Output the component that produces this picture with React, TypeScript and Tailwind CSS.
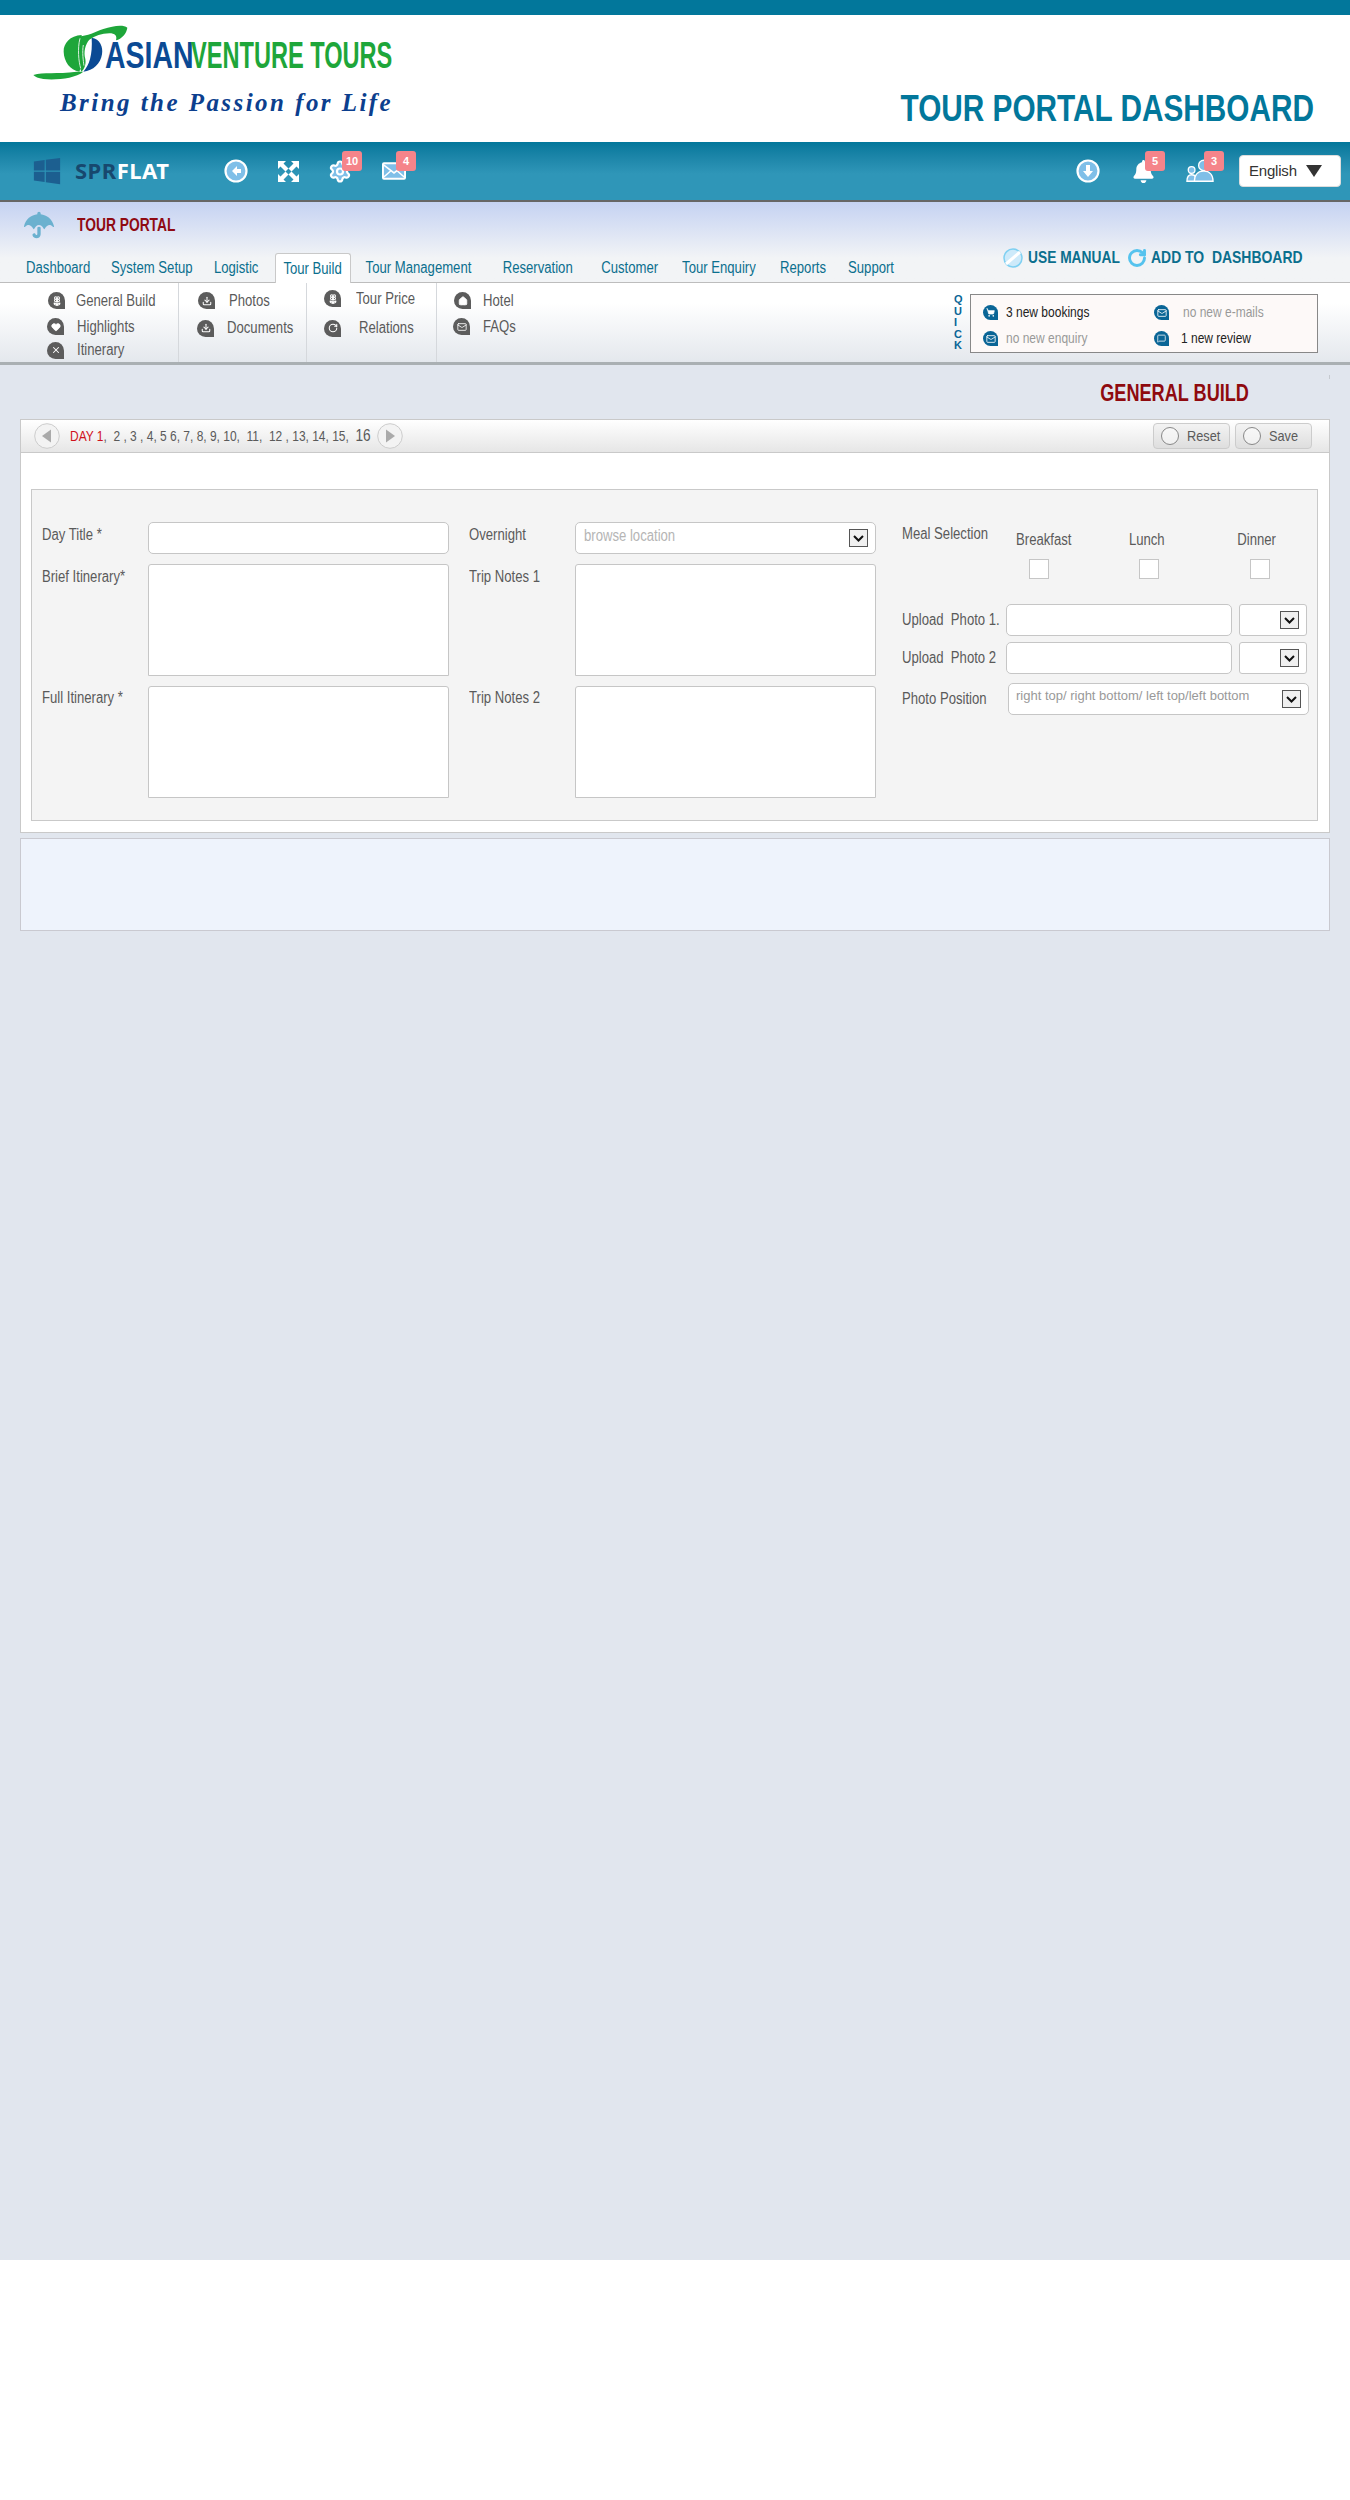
import React from "react";
import { Settings, Mail, Home, MessageSquare, ShoppingCart, Download, Heart, X, Flower2, RotateCw } from "lucide-react";
import { FaWindows, FaUmbrella, FaBell } from "react-icons/fa";

const font = "font-['Liberation_Sans',Arial,sans-serif]";

function T({ className = "scale-x-[0.82]", children }: { className?: string; children: React.ReactNode }) {
  return <span className={`inline-block origin-left whitespace-pre ${className}`}>{children}</span>;
}

function Badge({ n, className = "left-[14px]" }: { n: string; className?: string }) {
  return (
    <span className={`absolute -top-[8px] flex h-[20px] w-[20px] items-center justify-center rounded-[3px] bg-[#f5848a] text-[11px] font-bold text-white ${className}`}>
      {n}
    </span>
  );
}

function ToolIcon({ className, children, badge }: { className: string; children: React.ReactNode; badge?: string }) {
  return (
    <div className={`relative flex h-[24px] items-center justify-center ${className}`}>
      {children}
      {badge && <Badge n={badge} />}
    </div>
  );
}

function Bubble({ className = "h-[17px] w-[17px] bg-[#5c5c5c]", children }: { className?: string; children: React.ReactNode }) {
  return (
    <span className={`flex shrink-0 items-center justify-center rounded-full rounded-br-[2px] ${className}`}>
      {children}
    </span>
  );
}

function SubItem({ icon, label, className }: { icon: React.ReactNode; label: string; className: string }) {
  return (
    <div className={`flex items-center text-[16px] text-[#5a5a5a] ${className}`}>
      <Bubble>{icon}</Bubble>
      <T>{label}</T>
    </div>
  );
}

function Chevron() {
  return (
    <span className="absolute right-[7px] top-1/2 flex h-[18px] w-[19px] -translate-y-1/2 items-center justify-center border border-[#555] bg-[#f0f0f0]">
      <svg width="11" height="7" viewBox="0 0 11 7"><path d="M1 1l4.5 4.5L10 1" fill="none" stroke="#111" strokeWidth="2" /></svg>
    </span>
  );
}

function Field({ className, children }: { className: string; children?: React.ReactNode }) {
  return <div className={`relative border border-[#c6c6c6] bg-white ${className}`}>{children}</div>;
}

function Quick({ icon, text, className }: { icon: React.ReactNode; text: string; className: string }) {
  return (
    <div className={`flex items-center text-[15px] ${className}`}>
      <Bubble className="h-[15px] w-[15px] bg-[#0a6596]">{icon}</Bubble>
      <T className="scale-x-[0.8]">{text}</T>
    </div>
  );
}

function Tab({ className, children }: { className: string; children: string }) {
  return (
    <div className={`flex h-[30px] items-center justify-center text-[16px] text-[#0b6f8e] ${className}`}>
      <span className="inline-block scale-x-[0.82] whitespace-pre">{children}</span>
    </div>
  );
}

export default function App() {
  const w = { size: 10, color: "#fff", strokeWidth: 2.5 };
  const lbl = "text-[16px] text-[#5a5a5a]";
  return (
    <div className={`${font} w-[1350px]`}>
      <div className="h-[15px] bg-[#02779b]" />

      <header className="flex h-[127px] justify-between bg-white">
        <div className="relative w-[420px] pl-[60px]">
          <svg className="absolute left-[20px] top-0" width="200" height="100" viewBox="0 0 600 300">
            <path d="M215 68C240 72 250 95 246 118C242 145 220 168 190 170C208 150 218 120 215 68Z" fill="#0b4a94" />
            <path d="M185 60C150 62 130 85 131 110C132 140 150 165 178 170C190 150 180 100 185 60Z" fill="#1ea63a" />
            <path d="M172 64C205 64 225 50 250 42C280 32 310 28 322 38C320 55 305 72 288 76C292 62 285 55 268 55C245 55 225 62 208 74C196 88 190 110 196 132C199 150 192 164 184 170C176 150 172 100 172 64Z" fill="#1ea63a" />
            <path d="M40 180C70 170 110 178 170 170L190 170C165 190 110 196 70 192C55 190 45 186 40 180Z" fill="#1ea63a" />
            <path d="M180 70C172 100 176 140 182 160M190 90C186 110 190 140 192 152" stroke="#d8f0dc" strokeWidth="3" fill="none" />
          </svg>
          <div className="h-[28px]" />
          <div className="flex h-[26px] items-center whitespace-nowrap pl-[45px]">
            <span className="inline-block w-[86px] origin-left scale-x-[0.79] text-[36px] font-bold leading-none text-[#0b4a94]">ASIAN</span>
            <span className="inline-block origin-left scale-x-[0.655] text-[36px] font-bold leading-none text-[#1ea63a]">VENTURE TOURS</span>
          </div>
          <div className="mt-[19px] whitespace-nowrap font-['Liberation_Serif',serif] text-[25px] font-bold italic leading-[30px] tracking-[2.45px] text-[#0c3f8e]">
            Bring the Passion for Life
          </div>
        </div>
        <h1 className="mb-[13px] mr-[36px] origin-right scale-x-[0.827] self-end whitespace-nowrap text-[36px] font-bold leading-[40px] text-[#02779b]">
          TOUR PORTAL DASHBOARD
        </h1>
      </header>

      <nav className="flex h-[60px] items-center border-b-2 border-[#666] bg-gradient-to-b from-[#02779b] from-0% to-[#2f96b8] to-55% pl-[32px]">
        <FaWindows size={30} color="#1c5f90" />
        <span className="ml-[13px] w-[149px] whitespace-nowrap text-[24px] font-bold tracking-[0.5px]">
          <span className="inline-block font-['Noto_Sans',sans-serif] text-[22px] text-[#17486e]">SPR</span>
          <span className="font-['Noto_Sans',sans-serif] text-[22px] text-white">FLAT</span>
        </span>
        <ToolIcon className="w-[24px]">
          <svg width="24" height="24" viewBox="0 0 24 24"><circle cx="12" cy="12" r="10.5" fill="#7fbfe8" stroke="#fff" strokeWidth="2.2" /><path d="M13 7l-5 5 5 5v-3h4v-4h-4z" fill="#fff" /></svg>
        </ToolIcon>
        <ToolIcon className="ml-[28px] w-[24px]">
          <svg width="23" height="23" viewBox="0 0 23 23"><path d="M1 1h8L6.5 3.5 11.5 8.5 8.5 11.5 3.5 6.5 1 9zM22 1v8l-2.5-2.5-5 5-3-3 5-5L14 1zM1 22v-8l2.5 2.5 5-5 3 3-5 5L9 22zM22 22h-8l2.5-2.5-5-5 3-3 5 5L22 14z" fill="#fff" /></svg>
        </ToolIcon>
        <ToolIcon className="ml-[28px] w-[24px]" badge="10">
          <Settings size={27} color="#fff" fill="#7fbfe8" strokeWidth={2.2} />
        </ToolIcon>
        <ToolIcon className="ml-[30px] w-[24px]" badge="4">
          <svg width="25" height="18" viewBox="0 0 25 18"><rect x="1" y="1" width="23" height="16" rx="1" fill="#7fbfe8" stroke="#fff" strokeWidth="2" /><path d="M1 2l11.5 9L24 2M1 16l8-7M24 16l-8-7" fill="none" stroke="#fff" strokeWidth="1.6" /></svg>
        </ToolIcon>

        <div className="ml-auto flex items-center pr-[9px]">
          <ToolIcon className="w-[24px]">
            <svg width="24" height="24" viewBox="0 0 24 24"><circle cx="12" cy="12" r="10.5" fill="#7fbfe8" stroke="#fff" strokeWidth="2.2" /><path d="M10 6h4v6h3l-5 6-5-6h3z" fill="#fff" /></svg>
          </ToolIcon>
          <ToolIcon className="ml-[31px] w-[24px]" badge="5">
            <FaBell size={23} color="#fff" />
          </ToolIcon>
          <ToolIcon className="ml-[31px] w-[28px]">
            <svg width="30" height="26" viewBox="0 0 30 26">
              <circle cx="6" cy="12" r="3.6" fill="#7fbfe8" stroke="#fff" strokeWidth="1.4" />
              <path d="M1 24c0-5 2-7 5-7s4 1 4 3v4z" fill="#7fbfe8" stroke="#fff" strokeWidth="1.4" />
              <circle cx="19" cy="7" r="5.5" fill="#7fbfe8" stroke="#fff" strokeWidth="1.4" />
              <path d="M9 24c0-7 4-11 10-11s10 4 10 11z" fill="#7fbfe8" stroke="#fff" strokeWidth="1.4" />
            </svg>
            <Badge n="3" className="left-[18px]" />
          </ToolIcon>
          <div className="ml-[25px] flex h-[32px] w-[102px] items-center rounded-[4px] border border-[#ddd] bg-white pl-[9px] text-[15px] tracking-[-0.2px] text-[#333]">
            English
            <svg className="ml-[9px]" width="16" height="12" viewBox="0 0 16 12"><path d="M0 0h16L8 12z" fill="#333" /></svg>
          </div>
        </div>
      </nav>

      <section className="h-[81px] border-b border-[#bdbdbd] bg-gradient-to-b from-[#c5d2f2] from-0% to-[#f2f4f6] to-70%">
        <div className="flex h-[51px] items-start pl-[24px] pt-[8px]">
          <FaUmbrella size={30} color="#6bb1cf" />
          <T className="ml-[23px] mt-[2px] scale-x-[0.767] text-[18px] font-bold text-[#8f0a12]">TOUR PORTAL</T>
          <div className="ml-auto mr-[47px] mt-[35px] flex items-center text-[17px] font-bold text-[#0b6f8e]">
            <svg width="20" height="22" viewBox="0 0 20 22"><circle cx="10" cy="11" r="9" fill="#cdeafa" stroke="#7fd0f2" strokeWidth="1.5" /><path d="M3 17L17 5" stroke="#fff" strokeWidth="3" /></svg>
            <span className="ml-[5px] w-[92px]"><T className="scale-x-[0.81]">USE MANUAL</T></span>
            <RotateCw className="ml-[7px]" size={20} color="#55c3ee" strokeWidth={3.5} />
            <span className="ml-[4px] w-[152px]"><T>ADD TO  DASHBOARD</T></span>
          </div>
        </div>
        <div className="flex pl-[16px]">
          <Tab className="w-[84px]">Dashboard</Tab>
          <Tab className="w-[103px]">System Setup</Tab>
          <Tab className="w-[66px]">Logistic</Tab>
          <Tab className="relative ml-[6px] w-[76px] rounded-t-[3px] border border-b-0 border-[#c9c9c9] bg-white">Tour Build</Tab>
          <Tab className="w-[135px]">Tour Management</Tab>
          <Tab className="w-[103px]">Reservation</Tab>
          <Tab className="w-[81px]">Customer</Tab>
          <Tab className="w-[98px]">Tour Enquiry</Tab>
          <Tab className="w-[71px]">Reports</Tab>
          <Tab className="w-[64px]">Support</Tab>
        </div>
      </section>

      <section className="flex h-[82px] border-b-[3px] border-[#aab0b3] bg-gradient-to-b from-white from-25% to-[#e4e8ed]">
        <div className="h-full w-[179px] border-r border-[#d5d8dc] pl-[47px] pt-[5px]">
          <SubItem className="h-[25px] gap-[11px] pl-[1px]" icon={<Flower2 {...w} />} label="General Build" />
          <SubItem className="mt-[1px] h-[25px] gap-[13px]" icon={<Heart size={10} color="#fff" fill="#fff" />} label="Highlights" />
          <SubItem className="h-[22px] gap-[13px]" icon={<X {...w} />} label="Itinerary" />
        </div>
        <div className="h-full w-[128px] border-r border-[#d5d8dc] pl-[18px] pt-[5px]">
          <SubItem className="h-[25px] gap-[14px] pl-[1px]" icon={<Download {...w} />} label="Photos" />
          <SubItem className="mt-[2px] h-[26px] gap-[13px]" icon={<Download {...w} />} label="Documents" />
        </div>
        <div className="h-full w-[130px] border-r border-[#d5d8dc] pl-[17px] pt-[3px]">
          <SubItem className="h-[25px] gap-[15px]" icon={<Flower2 {...w} />} label="Tour Price" />
          <SubItem className="mt-[4px] h-[26px] gap-[18px]" icon={<RotateCw {...w} />} label="Relations" />
        </div>
        <div className="h-full w-[250px] pl-[16px] pt-[5px]">
          <SubItem className="h-[25px] gap-[12px] pl-[1px]" icon={<Home size={10} color="#fff" fill="#fff" />} label="Hotel" />
          <SubItem className="mt-[1px] h-[25px] gap-[13px]" icon={<Mail size={10} color="#fff" />} label="FAQs" />
        </div>
        <div className="ml-[267px] flex pt-[11px]">
          <div className="flex w-[16px] flex-col items-start text-[11px] font-bold leading-[11.5px] text-[#0a6596]">
            <span>Q</span><span>U</span><span>I</span><span>C</span><span>K</span>
          </div>
          <div className="h-[59px] w-[348px] border border-[#888] bg-[#fdf9f8] pl-[12px] pt-[7px]">
            <div className="flex h-[21px] items-center">
              <Quick className="w-[171px] gap-[8px] text-[#222]" icon={<ShoppingCart size={9} color="#fff" fill="#fff" />} text="3 new bookings" />
              <Quick className="gap-[14px] text-[#999]" icon={<Mail size={10} color="#fff" />} text="no new e-mails" />
            </div>
            <div className="mt-[5px] flex h-[21px] items-center">
              <Quick className="w-[171px] gap-[8px] text-[#999]" icon={<Mail size={10} color="#fff" />} text="no new enquiry" />
              <Quick className="gap-[12px] text-[#222]" icon={<MessageSquare size={9} color="#fff" />} text="1 new review" />
            </div>
          </div>
        </div>
      </section>

      <main className="h-[1895px] bg-[#e1e6ee] px-[20px]">
        <div className="relative flex h-[54px] items-center justify-end pr-[81px] pt-[2px]">
          <span className="absolute right-0 top-[10px] h-[4px] w-px bg-[#c5c9cf]" />
          <h2 className="origin-right scale-x-[0.755] whitespace-nowrap text-[24px] font-bold text-[#8f0a0f]">GENERAL BUILD</h2>
        </div>

        <div className="h-[414px] border border-[#c9c9c9] bg-white">
          <div className="flex h-[33px] items-center border-b border-[#c9c9c9] bg-gradient-to-b from-white to-[#e6e6e6] pl-[13px] pr-[17px]">
            <svg width="26" height="26" viewBox="0 0 26 26"><circle cx="13" cy="13" r="12.3" fill="#f3f3f3" stroke="#ccc" /><path d="M17 6.5v13L8 13z" fill="#aaa" /></svg>
            <span className="ml-[10px] w-[301px] text-[14px] text-[#5a5a5a]">
              <T className="scale-x-[0.855]">
                <span className="text-[#d0111b]">DAY 1</span>,  2 , 3 , 4, 5 6, 7, 8, 9, 10,  11,  12 , 13, 14, 15,  <span className="text-[16px]">16</span>
              </T>
            </span>
            <svg className="ml-[6px]" width="26" height="26" viewBox="0 0 26 26"><circle cx="13" cy="13" r="12.3" fill="#f3f3f3" stroke="#ccc" /><path d="M9 6.5v13l9-6.5z" fill="#aaa" /></svg>
            <div className="ml-auto flex gap-[5px]">
              {["Reset", "Save"].map((t) => (
                <div key={t} className="flex h-[26px] w-[77px] items-center rounded-[4px] border border-[#ccc] bg-gradient-to-b from-[#f3f3f3] to-[#dedede] pl-[7px] text-[15px] text-[#5a5a5a]">
                  <span className="mr-[8px] h-[18px] w-[18px] rounded-full border border-[#888] bg-white/50" />
                  <T className="scale-x-[0.85]">{t}</T>
                </div>
              ))}
            </div>
          </div>

          <div className="mx-[10px] mt-[36px] flex h-[332px] w-[1287px] border border-[#c9c9c9] bg-[#f4f4f4] pl-[10px] pt-[32px]">
            <div className="grid w-[407px] grid-cols-[106px_301px] grid-rows-[32px_112px_112px] gap-y-[10px]">
              <span className={`${lbl} mt-[1px]`}><T>Day Title *</T></span>
              <Field className="rounded-[5px]" />
              <span className={`${lbl} mt-[1px]`}><T>Brief Itinerary*</T></span>
              <Field className="rounded-t-[3px]" />
              <span className={`${lbl}`}><T>Full Itinerary *</T></span>
              <Field className="rounded-t-[3px]" />
            </div>
            <div className="ml-[20px] grid w-[407px] grid-cols-[106px_301px] grid-rows-[32px_112px_112px] gap-y-[10px]">
              <span className={`${lbl} mt-[1px]`}><T>Overnight</T></span>
              <Field className="rounded-[5px]">
                <T className="absolute left-[8px] top-[1px] scale-x-[0.82] text-[16px] text-[#b5b5b5]">browse location</T>
                <Chevron />
              </Field>
              <span className={`${lbl} mt-[1px]`}><T>Trip Notes 1</T></span>
              <Field className="rounded-t-[3px]" />
              <span className={`${lbl}`}><T>Trip Notes 2</T></span>
              <Field className="rounded-t-[3px]" />
            </div>
            <div className="ml-[26px] w-[408px]">
              <div className="flex h-[82px]">
                <span className={`${lbl} w-[92px]`}><T>Meal Selection</T></span>
                <div className={`${lbl} mt-[6px] flex w-[100px] flex-col items-center`}>
                  <span className="inline-block scale-x-[0.82]">Breakfast</span>
                  <span className="mr-[10px] mt-[7px] h-[20px] w-[20px] border border-[#c6c6c6] bg-white" />
                </div>
                <div className={`${lbl} ml-[3px] mt-[6px] flex w-[100px] flex-col items-center`}>
                  <span className="inline-block scale-x-[0.82]">Lunch</span>
                  <span className="ml-[4px] mt-[7px] h-[20px] w-[20px] border border-[#c6c6c6] bg-white" />
                </div>
                <div className={`${lbl} ml-[10px] mt-[6px] flex w-[100px] flex-col items-center`}>
                  <span className="inline-block scale-x-[0.82]">Dinner</span>
                  <span className="ml-[6px] mt-[7px] h-[20px] w-[20px] border border-[#c6c6c6] bg-white" />
                </div>
              </div>
              {["Upload  Photo 1.", "Upload  Photo 2"].map((t) => (
                <div key={t} className="mb-[6px] flex h-[32px] items-center">
                  <span className={`${lbl} w-[104px]`}><T>{t}</T></span>
                  <Field className="h-[32px] w-[226px] rounded-[5px]" />
                  <Field className="ml-[7px] h-[32px] w-[68px] rounded-[3px]"><Chevron /></Field>
                </div>
              ))}
              <div className="mt-[9px] flex h-[32px] items-center">
                <span className={`${lbl} w-[106px]`}><T>Photo Position</T></span>
                <Field className="h-[32px] w-[301px] rounded-[5px]">
                  <T className="absolute left-[7px] top-[2px] text-[13px] text-[#999]">right top/ right bottom/ left top/left bottom</T>
                  <Chevron />
                </Field>
              </div>
            </div>
          </div>
        </div>

        <div className="mt-[5px] h-[93px] border border-[#c9c9d0] bg-[#eef3fc]" />
      </main>
    </div>
  );
}
